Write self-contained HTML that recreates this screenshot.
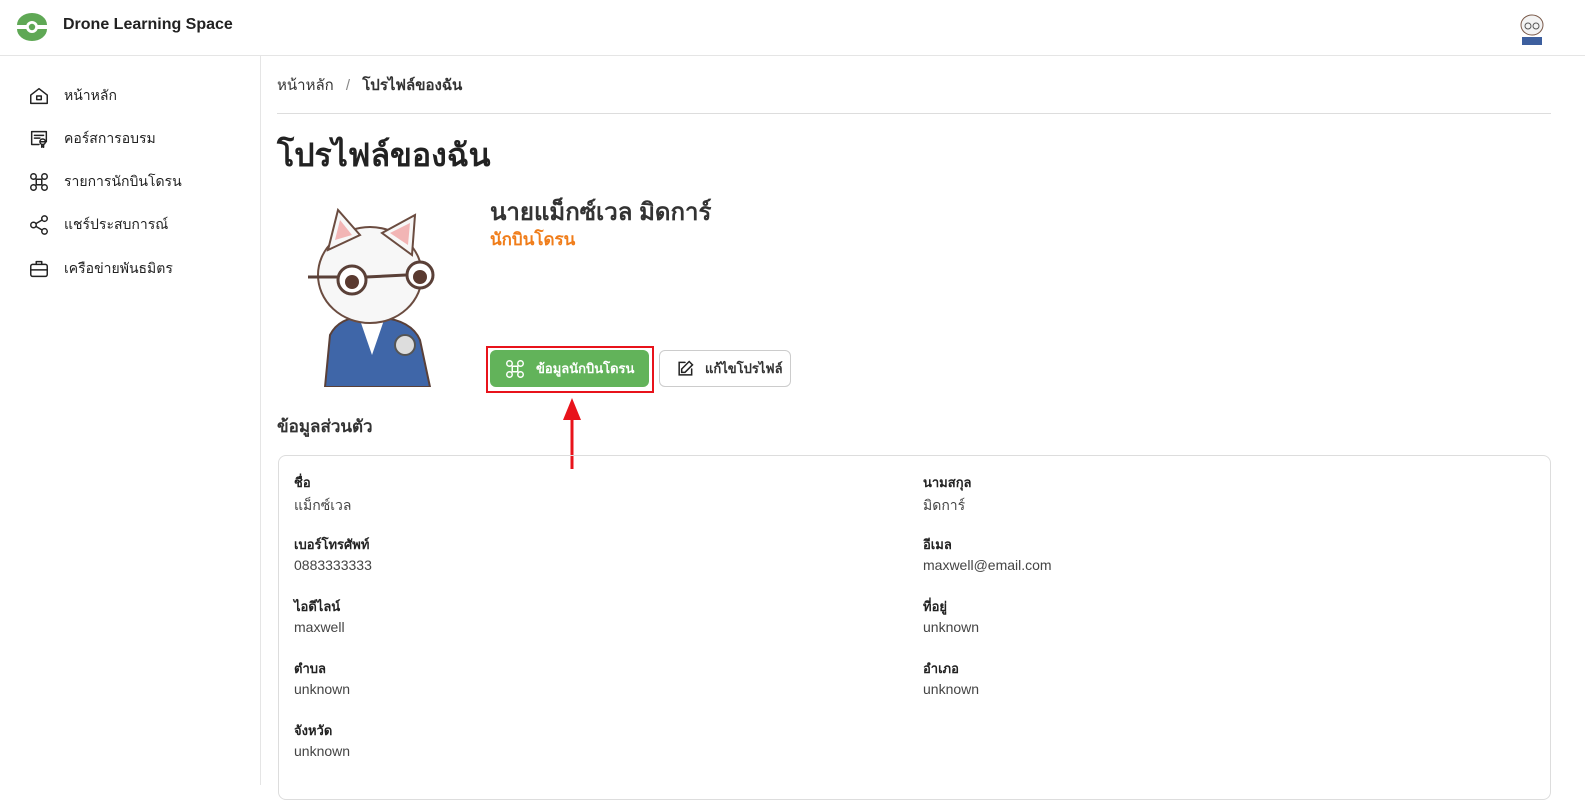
<!DOCTYPE html>
<html><head><meta charset="utf-8"><style>
*{box-sizing:border-box;margin:0;padding:0}
body{width:1585px;height:785px;overflow:hidden;background:#fff;font-family:"Liberation Sans","DejaVu Sans",sans-serif;color:#222;position:relative}
.a{position:absolute;white-space:nowrap}
.hdr{left:0;top:0;width:1585px;height:56px;border-bottom:1px solid #e5e5e5}
.side{left:0;top:56px;width:261px;height:729px;border-right:1px solid #e5e5e5}
.nav{left:28px;font-size:14px;display:flex;align-items:center;gap:14px;color:#222}
.nav svg{width:22px;height:22px;fill:none;stroke:#222;stroke-width:1.6;stroke-linecap:round;stroke-linejoin:round}
.lbl{font-size:13px;font-weight:bold;color:#222}
.val{font-size:14px;color:#444}
</style></head><body>
<div class="a hdr"></div>
<svg class="a" style="left:16px;top:13px" width="32" height="28" viewBox="0 0 32 28"><path d="M1 12 A15 12 0 0 1 31 12 Z" fill="#5fa855"/><path d="M1 16 A15 12 0 0 0 31 16 Z" fill="#5fa855"/><circle cx="16" cy="14" r="6" fill="#fff"/><circle cx="16" cy="14" r="3.2" fill="#5fa855"/></svg>
<div class="a" style="left:63px;top:16px;font-size:16px;font-weight:bold;color:#222">Drone Learning Space</div>
<svg class="a" style="left:1516px;top:11px" width="32" height="34" viewBox="0 0 32 34"><ellipse cx="16" cy="14" rx="11" ry="10" fill="#f3f3f3" stroke="#7a5a4a"/><path d="M6 26h20v8H6z" fill="#3d5f9e"/><circle cx="12" cy="15" r="3" fill="none" stroke="#555"/><circle cx="20" cy="15" r="3" fill="none" stroke="#555"/></svg>
<div class="a side"></div>
<div class="a nav" style="top:85px"><svg viewBox="0 0 24 24"><path d="M3 11l9-7 9 7v9H3z"/><rect x="9.5" y="12" width="5" height="4"/></svg>หน้าหลัก</div>
<div class="a nav" style="top:128px"><svg viewBox="0 0 24 24"><path d="M4 4h16v11h-6M4 4v14h8"/><path d="M7 8h10M7 11h6"/><circle cx="16" cy="15" r="3"/><path d="M15 18v3l1-1 1 1v-3"/></svg>คอร์สการอบรม</div>
<div class="a nav" style="top:171px"><svg viewBox="0 0 24 24"><rect x="9" y="9" width="6" height="6"/><circle cx="6" cy="6" r="3"/><circle cx="18" cy="6" r="3"/><circle cx="6" cy="18" r="3"/><circle cx="18" cy="18" r="3"/></svg>รายการนักบินโดรน</div>
<div class="a nav" style="top:214px"><svg viewBox="0 0 24 24"><circle cx="6" cy="12" r="3"/><circle cx="18" cy="5" r="3"/><circle cx="18" cy="19" r="3"/><path d="M8.6 10.5l6.8-4M8.6 13.5l6.8 4"/></svg>แชร์ประสบการณ์</div>
<div class="a nav" style="top:258px"><svg viewBox="0 0 24 24"><rect x="3" y="7" width="18" height="13" rx="2"/><path d="M9 7V4h6v3M3 13h18"/></svg>เครือข่ายพันธมิตร</div>

<div class="a" style="left:277px;top:73px;font-size:15px;color:#333">หน้าหลัก <span style="color:#888;margin:0 8px">/</span> <b>โปรไฟล์ของฉัน</b></div>
<div class="a" style="left:277px;top:113px;width:1274px;border-top:1px solid #ddd"></div>
<div class="a" style="left:277px;top:130px;font-size:32px;font-weight:bold;color:#222">โปรไฟล์ของฉัน</div>

<svg class="a" style="left:300px;top:205px" width="140" height="182" viewBox="0 0 140 182">
<path d="M25 182 L30 130 Q40 110 70 112 Q110 112 120 135 L130 182Z" fill="#3f66a8" stroke="#5a4038" stroke-width="2"/>
<path d="M60 115 L72 150 L84 115Z" fill="#fff"/>
<ellipse cx="70" cy="70" rx="52" ry="48" fill="#f7f7f7" stroke="#6b4c40" stroke-width="2"/>
<path d="M28 45 L38 5 L60 30Z" fill="#f7f7f7" stroke="#6b4c40" stroke-width="2"/><path d="M35 35 L40 15 L52 30Z" fill="#f2b5b5"/>
<path d="M82 28 L115 10 L112 50Z" fill="#f7f7f7" stroke="#6b4c40" stroke-width="2"/><path d="M90 28 L110 18 L108 40Z" fill="#f2b5b5"/>
<circle cx="52" cy="75" r="14" fill="#fff" stroke="#5a4038" stroke-width="3"/><circle cx="120" cy="70" r="13" fill="#fff" stroke="#5a4038" stroke-width="3"/>
<circle cx="52" cy="77" r="7" fill="#5a3a30"/><circle cx="120" cy="72" r="7" fill="#5a3a30"/>
<path d="M8 72 L38 72 M66 72 L106 70" stroke="#5a4038" stroke-width="3"/>
<circle cx="105" cy="140" r="10" fill="#ddd" stroke="#555" stroke-width="2"/>
</svg>

<div class="a" style="left:490px;top:192px;font-size:24px;font-weight:bold;color:#333">นายแม็กซ์เวล มิดการ์</div>
<div class="a" style="left:490px;top:226px;font-size:17px;font-weight:bold;color:#f07d1a">นักบินโดรน</div>

<div class="a" style="left:486px;top:346px;width:168px;height:47px;border:2px solid #e8131b"></div>
<div class="a" style="left:490px;top:350px;width:159px;height:37px;background:#62b35a;border-radius:6px;color:#fff;font-size:13px;font-weight:bold;display:flex;align-items:center;padding-left:14px;gap:10px"><svg width="22" height="22" viewBox="0 0 24 24" fill="none" stroke="#fff" stroke-width="1.6"><rect x="9" y="9" width="6" height="6"/><circle cx="6" cy="6" r="3"/><circle cx="18" cy="6" r="3"/><circle cx="6" cy="18" r="3"/><circle cx="18" cy="18" r="3"/></svg>ข้อมูลนักบินโดรน</div>
<div class="a" style="left:659px;top:350px;width:132px;height:37px;border:1px solid #ccc;border-radius:6px;font-size:13px;font-weight:bold;display:flex;align-items:center;padding-left:15px;gap:10px;color:#333"><svg width="20" height="20" viewBox="0 0 24 24" fill="none" stroke="#222" stroke-width="1.8" stroke-linecap="round"><path d="M12 4H5v15h15v-7"/><path d="M17 3l4 4-9 9H8v-4z"/></svg>แก้ไขโปรไฟล์</div>
<svg class="a" style="left:562px;top:398px" width="20" height="72"><path d="M10 0 L19 22 L1 22Z" fill="#e8131b"/><rect x="8.5" y="20" width="3" height="51" fill="#e8131b"/></svg>

<div class="a" style="left:277px;top:413px;font-size:17px;font-weight:bold;color:#333">ข้อมูลส่วนตัว</div>
<div class="a" style="left:278px;top:455px;width:1273px;height:345px;border:1px solid #ddd;border-radius:8px"></div>
<div class="a lbl" style="left:294px;top:472px">ชื่อ</div><div class="a val" style="left:294px;top:495px">แม็กซ์เวล</div>
<div class="a lbl" style="left:923px;top:472px">นามสกุล</div><div class="a val" style="left:923px;top:495px">มิดการ์</div>
<div class="a lbl" style="left:294px;top:534px">เบอร์โทรศัพท์</div><div class="a val" style="left:294px;top:557px">0883333333</div>
<div class="a lbl" style="left:923px;top:534px">อีเมล</div><div class="a val" style="left:923px;top:557px">maxwell@email.com</div>
<div class="a lbl" style="left:294px;top:596px">ไอดีไลน์</div><div class="a val" style="left:294px;top:619px">maxwell</div>
<div class="a lbl" style="left:923px;top:596px">ที่อยู่</div><div class="a val" style="left:923px;top:619px">unknown</div>
<div class="a lbl" style="left:294px;top:658px">ตำบล</div><div class="a val" style="left:294px;top:681px">unknown</div>
<div class="a lbl" style="left:923px;top:658px">อำเภอ</div><div class="a val" style="left:923px;top:681px">unknown</div>
<div class="a lbl" style="left:294px;top:720px">จังหวัด</div><div class="a val" style="left:294px;top:743px">unknown</div>
</body></html>
